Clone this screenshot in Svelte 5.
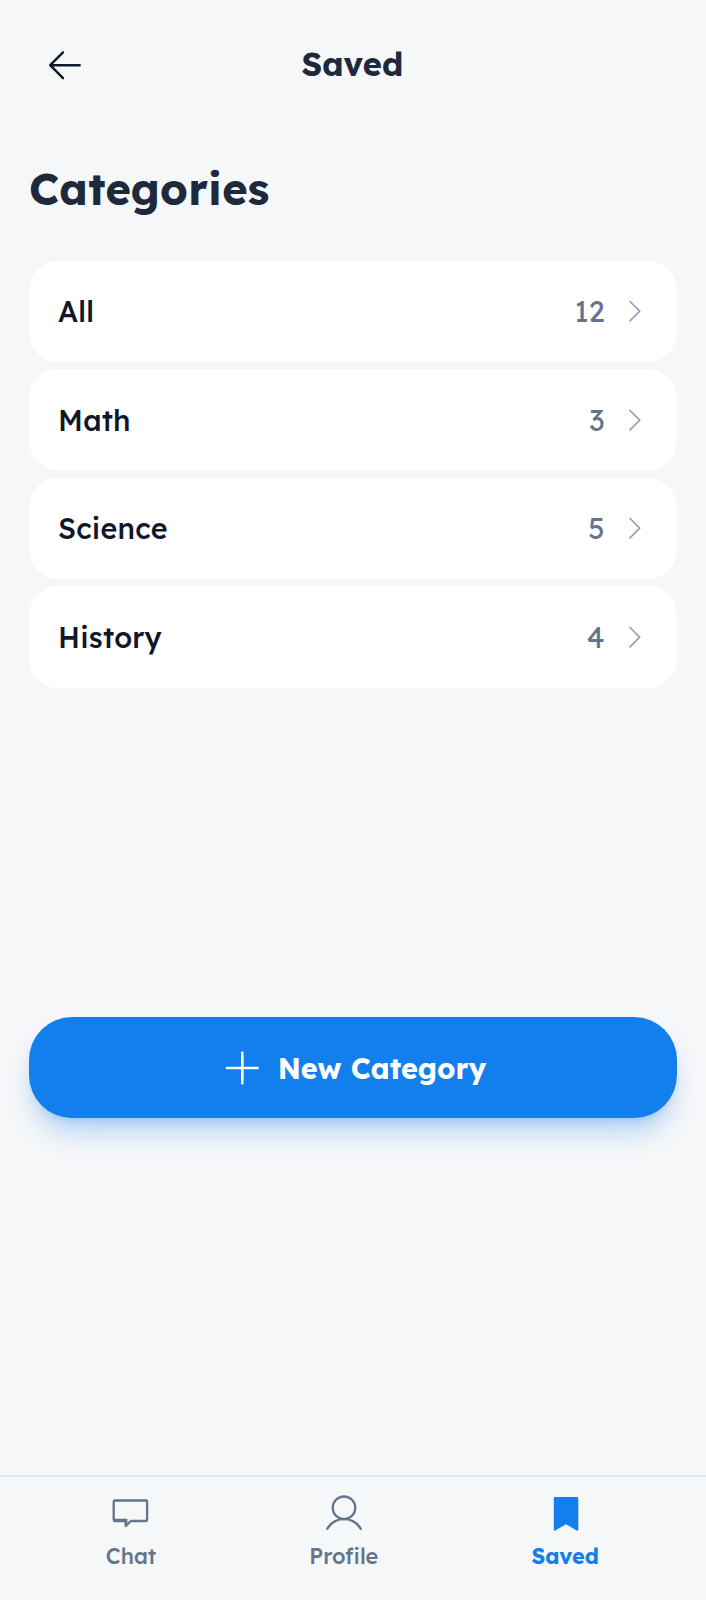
<script>
  const categories = [
    { name: 'All', count: 12 },
    { name: 'Math', count: 3 },
    { name: 'Science', count: 5 },
    { name: 'History', count: 4 }
  ];
</script>

<div class="page">
  <header>
    <button class="back" aria-label="Back">
      <svg width="36" height="36" viewBox="0 0 36 36" fill="none" stroke="currentColor" stroke-width="2.4" stroke-linecap="round" stroke-linejoin="round">
        <path d="M32.7 18.2H3.2M16 5.3L3.2 18.2L16 31.2" />
      </svg>
    </button>
    <h1>Saved</h1>
  </header>

  <h2>Categories</h2>

  <main>
    {#each categories as c}
      <div class="card">
        <span class="name">{c.name}</span>
        <span class="count">{c.count}</span>
        <svg class="chevron" width="12" height="22" viewBox="0 0 12 22" fill="none" stroke="currentColor" stroke-width="1.7" stroke-linecap="round" stroke-linejoin="round">
          <path d="M1 1.5L10.7 11.2L1 20.9" />
        </svg>
      </div>
    {/each}
  </main>

  <button class="create">
    <svg width="34" height="34" viewBox="0 0 34 34" fill="none" stroke="currentColor" stroke-width="2.6" stroke-linecap="round">
      <path d="M17.3 1.7V32.3M2 17H32.6" />
    </svg>
    <span>New Category</span>
  </button>

  <nav>
    <a class="chat" href="#chat">
      <svg width="38" height="38" viewBox="0 0 38 38" fill="none" stroke="currentColor" stroke-width="2.3" stroke-linejoin="round">
        <path d="M2.9 6.5H33.9Q35.1 6.5 35.1 7.7V25.8Q35.1 27 33.9 27H18.9L13.7 32V27H2.9Q1.7 27 1.7 25.8V7.7Q1.7 6.5 2.9 6.5Z" />
        <path d="M2.2 26H14.4L13.8 30.5" />
      </svg>
      <span>Chat</span>
    </a>
    <a class="profile" href="#profile">
      <svg width="38" height="38" viewBox="0 0 38 38" fill="none" stroke="currentColor" stroke-width="2.3" stroke-linecap="round">
        <circle cx="19" cy="13.8" r="11.3" />
        <path d="M2.2 34.8C6 28.6 12 25.1 19 25.1S32 28.6 35.8 34.8" />
      </svg>
      <span>Profile</span>
    </a>
    <a class="saved" href="#saved">
      <svg width="38" height="38" viewBox="0 0 38 38" fill="currentColor">
        <path d="M9.2 3H30.9Q32.3 3 32.3 4.4V35.6Q32.3 37.3 30.8 36.5L20 30.3L9.3 36.5Q7.8 37.3 7.8 35.6V4.4Q7.8 3 9.2 3Z" />
      </svg>
      <span>Saved</span>
    </a>
  </nav>
</div>

<style>
  :global(body) {
    margin: 0;
    background: #f6f7f9;
  }
  .page {
    box-sizing: border-box;
    width: 706px;
    height: 1600px;
    display: flex;
    flex-direction: column;
    background: #f6f7f9;
    color: #0f172a;
    font-family: Lexend, Inter, sans-serif;
    overflow: hidden;
  }
  button {
    border: 0;
    padding: 0;
    background: none;
    color: inherit;
    font: inherit;
  }
  header {
    height: 130px;
    flex: none;
    display: grid;
    grid-template-columns: 72px 1fr 72px;
    align-items: center;
    padding: 0 29px;
  }
  .back {
    width: 72px;
    height: 72px;
    display: flex;
    align-items: center;
    justify-content: center;
  }
  h1 {
    margin: 0 1px 2px 0;
    text-align: center;
    font-size: 32.6px;
    line-height: 40px;
    font-weight: 700;
    letter-spacing: 0.15px;
    color: #1e293b;
  }
  h2 {
    margin: 35px 29px 0;
    height: 48px;
    font-size: 43.4px;
    line-height: 48px;
    font-weight: 700;
    letter-spacing: 0.22px;
    color: #1e293b;
  }
  main {
    margin: 47.6px 29px 0;
    display: flex;
    flex-direction: column;
    gap: 7.3px;
  }
  .card {
    box-sizing: border-box;
    height: 101.3px;
    display: flex;
    align-items: center;
    padding: 0 36px 0 29px;
    border-radius: 29px;
    background: #fff;
  }
  .name {
    flex: 1;
    font-size: 28.7px;
    font-weight: 500;
    letter-spacing: 0.2px;
  }
  .count {
    font-size: 28.8px;
    font-weight: 400;
    color: #64748b;
  }
  .chevron {
    margin-left: 24.5px;
    color: #94a3b8;
  }
  .create {
    margin: 329.6px 29px 0;
    height: 101px;
    flex: none;
    display: flex;
    align-items: center;
    justify-content: center;
    gap: 18.5px;
    padding-left: 5.5px;
    border-radius: 43px;
    background: #137fec;
    color: #fff;
    font-size: 28.8px;
    font-weight: 700;
    box-shadow: 0 18px 27px -5px rgba(19, 127, 236, 0.3), 0 7px 11px -7px rgba(19, 127, 236, 0.3);
  }
  nav {
    box-sizing: border-box;
    margin-top: auto;
    height: 125px;
    display: flex;
    justify-content: space-around;
    padding: 17px 30.5px 0 29.3px;
    border-top: 2px solid #e2e8f0;
  }
  nav a {
    display: flex;
    flex-direction: column;
    align-items: center;
    gap: 8px;
    color: #64748b;
    font-size: 21.7px;
    line-height: 32px;
    font-weight: 500;
    text-decoration: none;
  }
  nav .saved {
    color: #137fec;
    font-weight: 700;
  }
</style>
